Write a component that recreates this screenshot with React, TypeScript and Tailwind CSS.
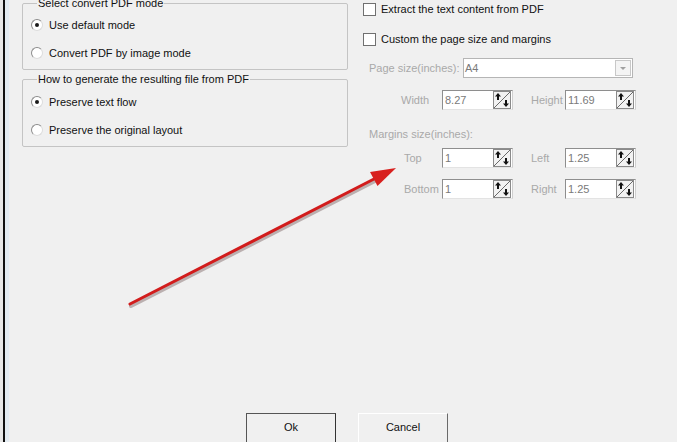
import React from 'react';

const font = { fontFamily: '"Liberation Sans", Arial, sans-serif' };

const Radio = ({ checked, label }: { checked?: boolean; label: string }) => (
    <div className="flex items-center h-[28px]">
        <span className="w-[12px] h-[12px] rounded-full bg-white border border-t-[#8c8c8c] border-l-[#8c8c8c] border-r-[#dcdcdc] border-b-[#dcdcdc] flex items-center justify-center">
            {checked && <span className="w-[4px] h-[4px] rounded-full bg-[#1a1a1a]" />}
        </span>
        <span className="ml-[6px] text-[11px] leading-[13px] text-[#111]">{label}</span>
    </div>
);

const Group = ({ title, children, className }: { title: string; children: React.ReactNode; className?: string }) => (
    <fieldset className={`w-[326px] border border-[#c4c4c4] rounded-[2px] pl-[8px] pt-[1px] pb-[2px] ${className || ''}`}>
        <legend className="ml-[6px] px-[1px] text-[11px] leading-[13px] text-[#111]">{title}</legend>
        {children}
    </fieldset>
);

const Checkbox = ({ label }: { label: string }) => (
    <div className="flex items-center h-[30px]">
        <span className="w-[13px] h-[13px] bg-white border border-[#707070]" />
        <span className="ml-[5px] text-[11px] leading-[13px] text-[#111]">{label}</span>
    </div>
);

const Spinner = () => (
    <svg width="18" height="18" viewBox="0 0 18 18" className="shrink-0">
        <rect x="0.5" y="0.5" width="17" height="17" fill="#f2f2f2" stroke="#8a8a8a" />
        <line x1="1" y1="17" x2="17" y2="1" stroke="#6a6a6a" strokeWidth="1" />
        <path d="M5 2 L8 5.5 L6 5.5 L6 9 L4 9 L4 5.5 L2 5.5 Z" fill="#111" />
        <path d="M13 16 L16 12.5 L14 12.5 L14 9 L12 9 L12 12.5 L10 12.5 Z" fill="#111" />
    </svg>
);

const NumInput = ({ value }: { value: string }) => (
    <div className="w-[71px] h-[20px] bg-white border border-t-[#8e8e8e] border-l-[#8e8e8e] border-r-[#cfcfcf] border-b-[#e3e3e3] flex items-center justify-between pl-[2px] pr-[1px]">
        <span className="text-[11px] leading-[13px] text-[#7a7a7a]">{value}</span>
        <Spinner />
    </div>
);

const Field = ({ label, value }: { label: string; value: string }) => (
    <>
        <span className="text-[11px] leading-[13px] text-[#a9a9a9]">{label}</span>
        <NumInput value={value} />
    </>
);

export default function App() {
    return (
        <div className="relative w-[677px] h-[442px] overflow-hidden bg-[#f0f0f0]" style={font}>
            <div className="flex h-full">
                {/* window edge */}
                <div className="w-[3px] bg-[#e8e8e8]" />
                <div className="w-[2px] bg-[#111]" />
                <div className="w-[4px] bg-[#e4ecf2]" />

                <div className="flex flex-col flex-1">
                    <div className="flex">
                        <div className="ml-[13px] mt-[-3px]">
                            <Group title="Select convert PDF mode">
                                <Radio checked label="Use default mode" />
                                <Radio label="Convert PDF by image mode" />
                            </Group>
                            <Group title="How to generate the resulting file from PDF" className="mt-[3px] pt-[2px]">
                                <Radio checked label="Preserve text flow" />
                                <Radio label="Preserve the original layout" />
                            </Group>
                        </div>

                        <div className="ml-[15px] mt-[-6px]">
                            <Checkbox label="Extract the text content from PDF" />
                            <Checkbox label="Custom the page size and margins" />

                            <div className="flex items-center mt-[4px] pl-[6px]">
                                <span className="w-[94px] text-[11px] leading-[13px] text-[#a9a9a9]">Page size(inches):</span>
                                <div className="w-[170px] h-[20px] bg-white border border-[#b5b5b5] flex items-center justify-between pl-[1px] pr-[1px]">
                                    <span className="text-[11px] leading-[13px] text-[#7a7a7a]">A4</span>
                                    <span className="w-[16px] h-[16px] bg-[#f4f4f4] border border-[#c8c8c8] flex items-center justify-center">
                                        <span className="w-0 h-0 border-l-[3px] border-r-[3px] border-t-[3px] border-l-transparent border-r-transparent border-t-[#a0a0a0]" />
                                    </span>
                                </div>
                            </div>

                            <div className="grid grid-cols-[41px_71px_18px_34px_71px] items-center mt-[12px] ml-[38px]">
                                <Field label="Width" value="8.27" />
                                <span />
                                <Field label="Height" value="11.69" />
                            </div>

                            <div className="mt-[18px] pl-[6px] text-[11px] leading-[13px] text-[#a9a9a9]">Margins size(inches):</div>

                            <div className="grid grid-cols-[41px_71px_18px_34px_71px] gap-y-[11px] items-center mt-[7px] ml-[38px]">
                                <span className="pl-[3px] text-[11px] leading-[13px] text-[#a9a9a9]">Top</span>
                                <NumInput value="1" />
                                <span />
                                <Field label="Left" value="1.25" />
                                <span className="pl-[3px] text-[11px] leading-[13px] text-[#a9a9a9]">Bottom</span>
                                <NumInput value="1" />
                                <span />
                                <Field label="Right" value="1.25" />
                            </div>
                        </div>
                    </div>

                    <div className="mt-auto flex gap-[22px] pl-[237px] mb-[-2px]">
                        <button className="w-[90px] h-[31px] bg-[#f0f0f0] border border-t-[#555] border-l-[#555] border-r-[#333] border-b-[#333] text-[11px] text-[#111] pb-[3px]">
                            Ok
                        </button>
                        <button className="w-[90px] h-[31px] bg-[#f0f0f0] border border-t-[#fff] border-l-[#fff] border-r-[#6a6a6a] border-b-[#6a6a6a] text-[11px] text-[#111] pb-[3px]">
                            Cancel
                        </button>
                    </div>
                </div>
            </div>

            {/* red annotation arrow */}
            <svg className="absolute inset-0 pointer-events-none" width="677" height="442">
                <line x1="131" y1="306" x2="375" y2="181" stroke="#5a3a3a" strokeOpacity="0.35" strokeWidth="4" strokeLinecap="round" />
                <line x1="130" y1="304" x2="374" y2="179" stroke="#d21c1c" strokeWidth="3" strokeLinecap="round" />
                <path d="M396 168 L377.5 186 L370 172 Z" fill="#d8201e" />
            </svg>
        </div>
    );
}
